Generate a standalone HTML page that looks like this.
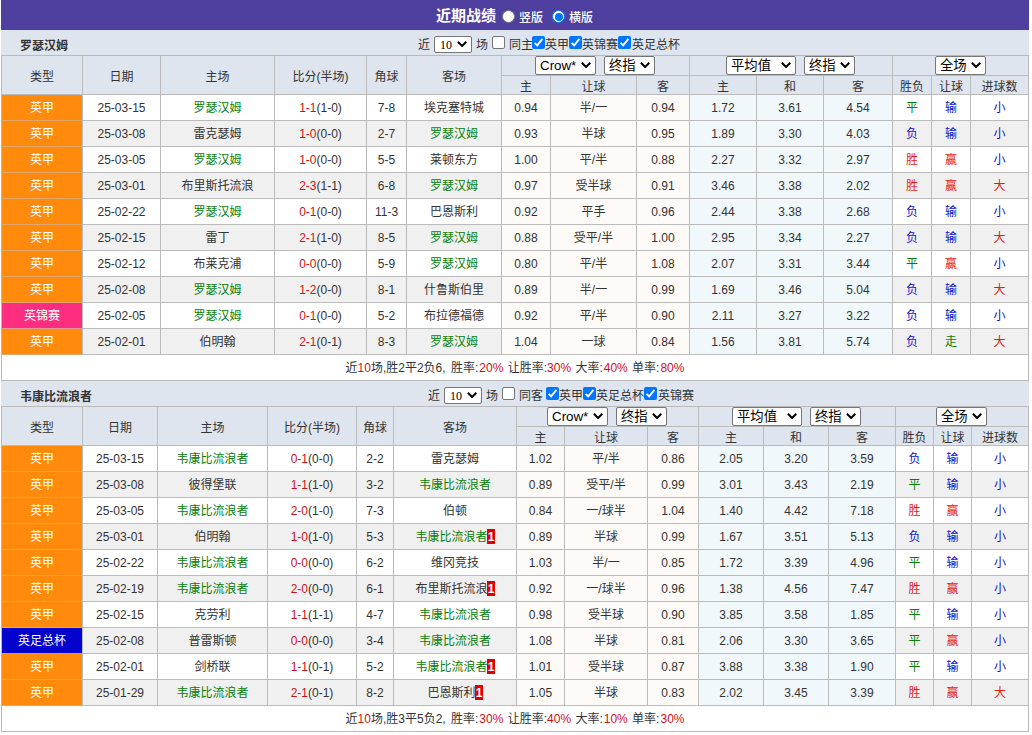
<!DOCTYPE html>
<html lang="zh-CN"><head><meta charset="utf-8"><title>近期战绩</title>
<style>
html,body{margin:0;padding:0;background:#fff;}
body{width:1032px;height:735px;overflow:hidden;position:relative;font-family:"Liberation Sans","Noto Sans CJK SC",sans-serif;font-size:12px;color:#333;}
.hd{position:absolute;left:1px;top:0;width:1028px;height:30px;background:#4f3f9f;color:#fff;}
.hd .ht{position:absolute;left:435px;top:0;line-height:32px;font-size:15px;font-weight:bold;white-space:nowrap;}
.hd .rl{position:absolute;top:0;line-height:37px;font-size:12px;font-weight:500;white-space:nowrap;}
.hd .rd{position:absolute;top:10px;width:11px;height:11px;border:1px solid #767676;border-radius:50%;background:#fff;}
.hd .rd.on{border-color:#0075ff;}
.hd .rd.on i{position:absolute;left:1.5px;top:1.5px;width:8px;height:8px;border-radius:50%;background:#0075ff;}
.tt{position:absolute;left:1px;width:1028px;height:25px;background:#dee5ef;}
.tt .tn{position:absolute;left:19px;top:0;line-height:33px;font-weight:bold;white-space:nowrap;}
.tt .ft{position:absolute;top:0;line-height:30px;white-space:nowrap;}
.tt .fs{position:absolute;top:6px;}
.cb{position:absolute;top:6px;width:11px;height:11px;border:1px solid #767676;border-radius:2px;background:#fff;}
.cb.on{border:0;width:13px;height:13px;background:#0075ff;}
.cb svg{display:block;}
table.t{position:absolute;left:1px;width:1028px;border-collapse:separate;border-spacing:1px;background:#bbb;table-layout:fixed;}
table.t th,table.t td{padding:0;text-align:center;font-weight:normal;white-space:nowrap;overflow:hidden;}
table.t th{background:#dee5ef;}
tr.h1 th{height:19px;}
tr.h2 th{height:14px;line-height:14px;padding-top:4px;}
tr.odd td,tr.even td,tr.sum td{height:23px;line-height:23px;padding-top:2px;}
tr.odd td{background:#fff;}
tr.even td{background:#f0f0f0;}
tr.sum td{background:#fff;word-spacing:1px;}
td.as{background:#fdfaf7 !important;}
td.eu{background:#f1f8fc !important;}
td.lg{color:#fff;font-weight:500;}
td.lg.o{background:#ff8a0c !important;box-shadow:0 1px 0 rgba(255,150,40,.55);}
td.lg.p{background:#ff2d80 !important;box-shadow:0 1px 0 rgba(255,120,120,.55);}
td.lg.u{background:#0303cd !important;box-shadow:0 1px 0 rgba(200,120,140,.5);}
.g{color:#0a800a;}
.r{color:#d01018;}
.bb{color:#1010d0;}
.rr{color:#e41c10;}
.gg{color:#0a800a;}
.rc{background:#e00000;color:#fff;font-weight:bold;padding:1px 0.2px 0 0.2px;}
.sw{display:flex;justify-content:flex-start;align-items:flex-start;height:19px;}
.sw .sel+.sel{margin-left:8px;}
.sel{display:block;flex:none;position:relative;box-sizing:border-box;height:19px;border:1px solid #767676;border-radius:2px;background:#fff;color:#000;font-size:13.33px;text-align:left;}
.sel .st{position:absolute;left:4px;top:0;line-height:17px;white-space:nowrap;}
.sel .ar{position:absolute;right:4px;top:5px;}
.sel.s0{height:17px;font-size:12px;font-family:"Liberation Serif","Noto Serif CJK SC",serif;}
.sel.s0 .st{line-height:17px;left:5px;}
.sel.s0 .ar{top:4px;}
.tt.ta{top:30px;} .tt.tb{top:381px;}
table.t1{top:55px;} table.t2{top:406px;}

</style></head>
<body>
<div class="hd"><span class="ht">近期战绩</span><span class="rd" style="left:501px"></span><span class="rl" style="left:518px">竖版</span><span class="rd on" style="left:551px"><i></i></span><span class="rl" style="left:568px">横版</span></div>
<div class="tt ta"><span class="tn">罗瑟汉姆</span><span class="ft" style="left:417px">近</span><span class="fs" style="left:433px"><span class="sel s0" style="width:38px"><span class="st">10</span><svg class="ar" width="10" height="6" viewBox="0 0 10 6"><path d="M0.9 0.8 L5.1 5 L9.3 0.8" fill="none" stroke="#000" stroke-width="2" stroke-linecap="butt" stroke-linejoin="miter"/></svg></span></span><span class="ft" style="left:475px">场</span><span class="cb" style="left:491px"></span><span class="ft" style="left:508px">同主</span><span class="cb on" style="left:531px"><svg width="13" height="13" viewBox="0 0 13 13"><path d="M2.6 6.8 L5.2 9.4 L10.4 2.9" fill="none" stroke="#fff" stroke-width="1.9"/></svg></span><span class="ft" style="left:544px">英甲</span><span class="cb on" style="left:568px"><svg width="13" height="13" viewBox="0 0 13 13"><path d="M2.6 6.8 L5.2 9.4 L10.4 2.9" fill="none" stroke="#fff" stroke-width="1.9"/></svg></span><span class="ft" style="left:581px">英锦赛</span><span class="cb on" style="left:617px"><svg width="13" height="13" viewBox="0 0 13 13"><path d="M2.6 6.8 L5.2 9.4 L10.4 2.9" fill="none" stroke="#fff" stroke-width="1.9"/></svg></span><span class="ft" style="left:631px">英足总杯</span></div>
<table class="t t1"><colgroup><col style="width:80px"><col style="width:77px"><col style="width:113px"><col style="width:91px"><col style="width:39px"><col style="width:94px"><col style="width:48px"><col style="width:85px"><col style="width:52px"><col style="width:66px"><col style="width:66px"><col style="width:68px"><col style="width:38px"><col style="width:38px"><col style="width:57px"></colgroup><tr class="h1"><th rowspan="2">类型</th><th rowspan="2">日期</th><th rowspan="2">主场</th><th rowspan="2">比分(半场)</th><th rowspan="2">角球</th><th rowspan="2">客场</th><th colspan="3" class="sc"><div class="sw" style="padding-left:33px"><span class="sel s1" style="width:61px"><span class="st">Crow*</span><svg class="ar" width="10" height="6" viewBox="0 0 10 6"><path d="M0.9 0.8 L5.1 5 L9.3 0.8" fill="none" stroke="#000" stroke-width="2" stroke-linecap="butt" stroke-linejoin="miter"/></svg></span><span class="sel s2" style="width:51px"><span class="st">终指</span><svg class="ar" width="10" height="6" viewBox="0 0 10 6"><path d="M0.9 0.8 L5.1 5 L9.3 0.8" fill="none" stroke="#000" stroke-width="2" stroke-linecap="butt" stroke-linejoin="miter"/></svg></span></div></th><th colspan="3" class="sc"><div class="sw" style="padding-left:36px"><span class="sel s3" style="width:70px"><span class="st">平均值</span><svg class="ar" width="10" height="6" viewBox="0 0 10 6"><path d="M0.9 0.8 L5.1 5 L9.3 0.8" fill="none" stroke="#000" stroke-width="2" stroke-linecap="butt" stroke-linejoin="miter"/></svg></span><span class="sel s2" style="width:51px"><span class="st">终指</span><svg class="ar" width="10" height="6" viewBox="0 0 10 6"><path d="M0.9 0.8 L5.1 5 L9.3 0.8" fill="none" stroke="#000" stroke-width="2" stroke-linecap="butt" stroke-linejoin="miter"/></svg></span></div></th><th colspan="3" class="sc"><div class="sw" style="padding-left:42px"><span class="sel s5" style="width:51px"><span class="st">全场</span><svg class="ar" width="10" height="6" viewBox="0 0 10 6"><path d="M0.9 0.8 L5.1 5 L9.3 0.8" fill="none" stroke="#000" stroke-width="2" stroke-linecap="butt" stroke-linejoin="miter"/></svg></span></div></th></tr><tr class="h2"><th>主</th><th>让球</th><th>客</th><th>主</th><th>和</th><th>客</th><th>胜负</th><th>让球</th><th>进球数</th></tr>
<tr class="odd"><td class="lg o">英甲</td><td>25-03-15</td><td><span class="g">罗瑟汉姆</span></td><td><span class="r">1-1</span>(1-0)</td><td>7-8</td><td>埃克塞特城</td><td class="as">0.94</td><td class="as">半/一</td><td class="as">0.94</td><td class="eu">1.72</td><td class="eu">3.61</td><td class="eu">4.54</td><td><span class="gg">平</span></td><td><span class="bb">输</span></td><td><span class="bb">小</span></td></tr>
<tr class="even"><td class="lg o">英甲</td><td>25-03-08</td><td>雷克瑟姆</td><td><span class="r">1-0</span>(0-0)</td><td>2-7</td><td><span class="g">罗瑟汉姆</span></td><td class="as">0.93</td><td class="as">半球</td><td class="as">0.95</td><td class="eu">1.89</td><td class="eu">3.30</td><td class="eu">4.03</td><td><span class="bb">负</span></td><td><span class="bb">输</span></td><td><span class="bb">小</span></td></tr>
<tr class="odd"><td class="lg o">英甲</td><td>25-03-05</td><td><span class="g">罗瑟汉姆</span></td><td><span class="r">1-0</span>(0-0)</td><td>5-5</td><td>莱顿东方</td><td class="as">1.00</td><td class="as">平/半</td><td class="as">0.88</td><td class="eu">2.27</td><td class="eu">3.32</td><td class="eu">2.97</td><td><span class="rr">胜</span></td><td><span class="rr">赢</span></td><td><span class="bb">小</span></td></tr>
<tr class="even"><td class="lg o">英甲</td><td>25-03-01</td><td>布里斯托流浪</td><td><span class="r">2-3</span>(1-1)</td><td>6-8</td><td><span class="g">罗瑟汉姆</span></td><td class="as">0.97</td><td class="as">受半球</td><td class="as">0.91</td><td class="eu">3.46</td><td class="eu">3.38</td><td class="eu">2.02</td><td><span class="rr">胜</span></td><td><span class="rr">赢</span></td><td><span class="rr">大</span></td></tr>
<tr class="odd"><td class="lg o">英甲</td><td>25-02-22</td><td><span class="g">罗瑟汉姆</span></td><td><span class="r">0-1</span>(0-0)</td><td>11-3</td><td>巴恩斯利</td><td class="as">0.92</td><td class="as">平手</td><td class="as">0.96</td><td class="eu">2.44</td><td class="eu">3.38</td><td class="eu">2.68</td><td><span class="bb">负</span></td><td><span class="bb">输</span></td><td><span class="bb">小</span></td></tr>
<tr class="even"><td class="lg o">英甲</td><td>25-02-15</td><td>雷丁</td><td><span class="r">2-1</span>(1-0)</td><td>8-5</td><td><span class="g">罗瑟汉姆</span></td><td class="as">0.88</td><td class="as">受平/半</td><td class="as">1.00</td><td class="eu">2.95</td><td class="eu">3.34</td><td class="eu">2.27</td><td><span class="bb">负</span></td><td><span class="bb">输</span></td><td><span class="rr">大</span></td></tr>
<tr class="odd"><td class="lg o">英甲</td><td>25-02-12</td><td>布莱克浦</td><td><span class="r">0-0</span>(0-0)</td><td>5-9</td><td><span class="g">罗瑟汉姆</span></td><td class="as">0.80</td><td class="as">平/半</td><td class="as">1.08</td><td class="eu">2.07</td><td class="eu">3.31</td><td class="eu">3.44</td><td><span class="gg">平</span></td><td><span class="rr">赢</span></td><td><span class="bb">小</span></td></tr>
<tr class="even"><td class="lg o">英甲</td><td>25-02-08</td><td><span class="g">罗瑟汉姆</span></td><td><span class="r">1-2</span>(0-0)</td><td>8-1</td><td>什鲁斯伯里</td><td class="as">0.89</td><td class="as">半/一</td><td class="as">0.99</td><td class="eu">1.69</td><td class="eu">3.46</td><td class="eu">5.04</td><td><span class="bb">负</span></td><td><span class="bb">输</span></td><td><span class="rr">大</span></td></tr>
<tr class="odd"><td class="lg p">英锦赛</td><td>25-02-05</td><td><span class="g">罗瑟汉姆</span></td><td><span class="r">0-1</span>(0-0)</td><td>5-2</td><td>布拉德福德</td><td class="as">0.92</td><td class="as">平/半</td><td class="as">0.90</td><td class="eu">2.11</td><td class="eu">3.27</td><td class="eu">3.22</td><td><span class="bb">负</span></td><td><span class="bb">输</span></td><td><span class="bb">小</span></td></tr>
<tr class="even"><td class="lg o">英甲</td><td>25-02-01</td><td>伯明翰</td><td><span class="r">2-1</span>(0-1)</td><td>8-3</td><td><span class="g">罗瑟汉姆</span></td><td class="as">1.04</td><td class="as">一球</td><td class="as">0.84</td><td class="eu">1.56</td><td class="eu">3.81</td><td class="eu">5.74</td><td><span class="bb">负</span></td><td><span class="gg">走</span></td><td><span class="rr">大</span></td></tr>
<tr class="sum"><td colspan="15">近<span class="r">10</span>场,胜2平2负6, <span style="margin-left:1px">胜率</span>:<span class="r" style="margin-left:1px">20%</span> 让胜率:<span class="r">30%</span> 大率:<span class="r" style="margin-left:1px">40%</span> 单率:<span class="r" style="margin-left:1px">80%</span></td></tr></table>
<div class="tt tb"><span class="tn">韦康比流浪者</span><span class="ft" style="left:427px">近</span><span class="fs" style="left:443px"><span class="sel s0" style="width:38px"><span class="st">10</span><svg class="ar" width="10" height="6" viewBox="0 0 10 6"><path d="M0.9 0.8 L5.1 5 L9.3 0.8" fill="none" stroke="#000" stroke-width="2" stroke-linecap="butt" stroke-linejoin="miter"/></svg></span></span><span class="ft" style="left:485px">场</span><span class="cb" style="left:501px"></span><span class="ft" style="left:518px">同客</span><span class="cb on" style="left:545px"><svg width="13" height="13" viewBox="0 0 13 13"><path d="M2.6 6.8 L5.2 9.4 L10.4 2.9" fill="none" stroke="#fff" stroke-width="1.9"/></svg></span><span class="ft" style="left:558px">英甲</span><span class="cb on" style="left:582px"><svg width="13" height="13" viewBox="0 0 13 13"><path d="M2.6 6.8 L5.2 9.4 L10.4 2.9" fill="none" stroke="#fff" stroke-width="1.9"/></svg></span><span class="ft" style="left:595px">英足总杯</span><span class="cb on" style="left:643px"><svg width="13" height="13" viewBox="0 0 13 13"><path d="M2.6 6.8 L5.2 9.4 L10.4 2.9" fill="none" stroke="#fff" stroke-width="1.9"/></svg></span><span class="ft" style="left:657px">英锦赛</span></div>
<table class="t t2"><colgroup><col style="width:80px"><col style="width:74px"><col style="width:109px"><col style="width:88px"><col style="width:36px"><col style="width:122px"><col style="width:47px"><col style="width:82px"><col style="width:50px"><col style="width:64px"><col style="width:64px"><col style="width:66px"><col style="width:37px"><col style="width:37px"><col style="width:56px"></colgroup><tr class="h1"><th rowspan="2">类型</th><th rowspan="2">日期</th><th rowspan="2">主场</th><th rowspan="2">比分(半场)</th><th rowspan="2">角球</th><th rowspan="2">客场</th><th colspan="3" class="sc"><div class="sw" style="padding-left:30px"><span class="sel s1" style="width:61px"><span class="st">Crow*</span><svg class="ar" width="10" height="6" viewBox="0 0 10 6"><path d="M0.9 0.8 L5.1 5 L9.3 0.8" fill="none" stroke="#000" stroke-width="2" stroke-linecap="butt" stroke-linejoin="miter"/></svg></span><span class="sel s2" style="width:51px"><span class="st">终指</span><svg class="ar" width="10" height="6" viewBox="0 0 10 6"><path d="M0.9 0.8 L5.1 5 L9.3 0.8" fill="none" stroke="#000" stroke-width="2" stroke-linecap="butt" stroke-linejoin="miter"/></svg></span></div></th><th colspan="3" class="sc"><div class="sw" style="padding-left:33px"><span class="sel s3" style="width:70px"><span class="st">平均值</span><svg class="ar" width="10" height="6" viewBox="0 0 10 6"><path d="M0.9 0.8 L5.1 5 L9.3 0.8" fill="none" stroke="#000" stroke-width="2" stroke-linecap="butt" stroke-linejoin="miter"/></svg></span><span class="sel s2" style="width:51px"><span class="st">终指</span><svg class="ar" width="10" height="6" viewBox="0 0 10 6"><path d="M0.9 0.8 L5.1 5 L9.3 0.8" fill="none" stroke="#000" stroke-width="2" stroke-linecap="butt" stroke-linejoin="miter"/></svg></span></div></th><th colspan="3" class="sc"><div class="sw" style="padding-left:40px"><span class="sel s5" style="width:51px"><span class="st">全场</span><svg class="ar" width="10" height="6" viewBox="0 0 10 6"><path d="M0.9 0.8 L5.1 5 L9.3 0.8" fill="none" stroke="#000" stroke-width="2" stroke-linecap="butt" stroke-linejoin="miter"/></svg></span></div></th></tr><tr class="h2"><th>主</th><th>让球</th><th>客</th><th>主</th><th>和</th><th>客</th><th>胜负</th><th>让球</th><th>进球数</th></tr>
<tr class="odd"><td class="lg o">英甲</td><td>25-03-15</td><td><span class="g">韦康比流浪者</span></td><td><span class="r">0-1</span>(0-0)</td><td>2-2</td><td>雷克瑟姆</td><td class="as">1.02</td><td class="as">平/半</td><td class="as">0.86</td><td class="eu">2.05</td><td class="eu">3.20</td><td class="eu">3.59</td><td><span class="bb">负</span></td><td><span class="bb">输</span></td><td><span class="bb">小</span></td></tr>
<tr class="even"><td class="lg o">英甲</td><td>25-03-08</td><td>彼得堡联</td><td><span class="r">1-1</span>(1-0)</td><td>3-2</td><td><span class="g">韦康比流浪者</span></td><td class="as">0.89</td><td class="as">受平/半</td><td class="as">0.99</td><td class="eu">3.01</td><td class="eu">3.43</td><td class="eu">2.19</td><td><span class="gg">平</span></td><td><span class="bb">输</span></td><td><span class="bb">小</span></td></tr>
<tr class="odd"><td class="lg o">英甲</td><td>25-03-05</td><td><span class="g">韦康比流浪者</span></td><td><span class="r">2-0</span>(1-0)</td><td>7-3</td><td>伯顿</td><td class="as">0.84</td><td class="as">一/球半</td><td class="as">1.04</td><td class="eu">1.40</td><td class="eu">4.42</td><td class="eu">7.18</td><td><span class="rr">胜</span></td><td><span class="rr">赢</span></td><td><span class="bb">小</span></td></tr>
<tr class="even"><td class="lg o">英甲</td><td>25-03-01</td><td>伯明翰</td><td><span class="r">1-0</span>(1-0)</td><td>5-3</td><td><span class="g">韦康比流浪者</span><span class="rc">1</span></td><td class="as">0.89</td><td class="as">半球</td><td class="as">0.99</td><td class="eu">1.67</td><td class="eu">3.51</td><td class="eu">5.13</td><td><span class="bb">负</span></td><td><span class="bb">输</span></td><td><span class="bb">小</span></td></tr>
<tr class="odd"><td class="lg o">英甲</td><td>25-02-22</td><td><span class="g">韦康比流浪者</span></td><td><span class="r">0-0</span>(0-0)</td><td>6-2</td><td>维冈竞技</td><td class="as">1.03</td><td class="as">半/一</td><td class="as">0.85</td><td class="eu">1.72</td><td class="eu">3.39</td><td class="eu">4.96</td><td><span class="gg">平</span></td><td><span class="bb">输</span></td><td><span class="bb">小</span></td></tr>
<tr class="even"><td class="lg o">英甲</td><td>25-02-19</td><td><span class="g">韦康比流浪者</span></td><td><span class="r">2-0</span>(0-0)</td><td>6-1</td><td>布里斯托流浪<span class="rc">1</span></td><td class="as">0.92</td><td class="as">一/球半</td><td class="as">0.96</td><td class="eu">1.38</td><td class="eu">4.56</td><td class="eu">7.47</td><td><span class="rr">胜</span></td><td><span class="rr">赢</span></td><td><span class="bb">小</span></td></tr>
<tr class="odd"><td class="lg o">英甲</td><td>25-02-15</td><td>克劳利</td><td><span class="r">1-1</span>(1-1)</td><td>4-7</td><td><span class="g">韦康比流浪者</span></td><td class="as">0.98</td><td class="as">受半球</td><td class="as">0.90</td><td class="eu">3.85</td><td class="eu">3.58</td><td class="eu">1.85</td><td><span class="gg">平</span></td><td><span class="bb">输</span></td><td><span class="bb">小</span></td></tr>
<tr class="even"><td class="lg u">英足总杯</td><td>25-02-08</td><td>普雷斯顿</td><td><span class="r">0-0</span>(0-0)</td><td>3-4</td><td><span class="g">韦康比流浪者</span></td><td class="as">1.08</td><td class="as">半球</td><td class="as">0.81</td><td class="eu">2.06</td><td class="eu">3.30</td><td class="eu">3.65</td><td><span class="gg">平</span></td><td><span class="rr">赢</span></td><td><span class="bb">小</span></td></tr>
<tr class="odd"><td class="lg o">英甲</td><td>25-02-01</td><td>剑桥联</td><td><span class="r">1-1</span>(0-1)</td><td>5-2</td><td><span class="g">韦康比流浪者</span><span class="rc">1</span></td><td class="as">1.01</td><td class="as">受半球</td><td class="as">0.87</td><td class="eu">3.88</td><td class="eu">3.38</td><td class="eu">1.90</td><td><span class="gg">平</span></td><td><span class="bb">输</span></td><td><span class="bb">小</span></td></tr>
<tr class="even"><td class="lg o">英甲</td><td>25-01-29</td><td><span class="g">韦康比流浪者</span></td><td><span class="r">2-1</span>(0-1)</td><td>8-2</td><td>巴恩斯利<span class="rc">1</span></td><td class="as">1.05</td><td class="as">半球</td><td class="as">0.83</td><td class="eu">2.02</td><td class="eu">3.45</td><td class="eu">3.39</td><td><span class="rr">胜</span></td><td><span class="rr">赢</span></td><td><span class="rr">大</span></td></tr>
<tr class="sum"><td colspan="15">近<span class="r">10</span>场,胜3平5负2, <span style="margin-left:1px">胜率</span>:<span class="r" style="margin-left:1px">30%</span> 让胜率:<span class="r">40%</span> 大率:<span class="r" style="margin-left:1px">10%</span> 单率:<span class="r" style="margin-left:1px">30%</span></td></tr></table>
</body></html>
